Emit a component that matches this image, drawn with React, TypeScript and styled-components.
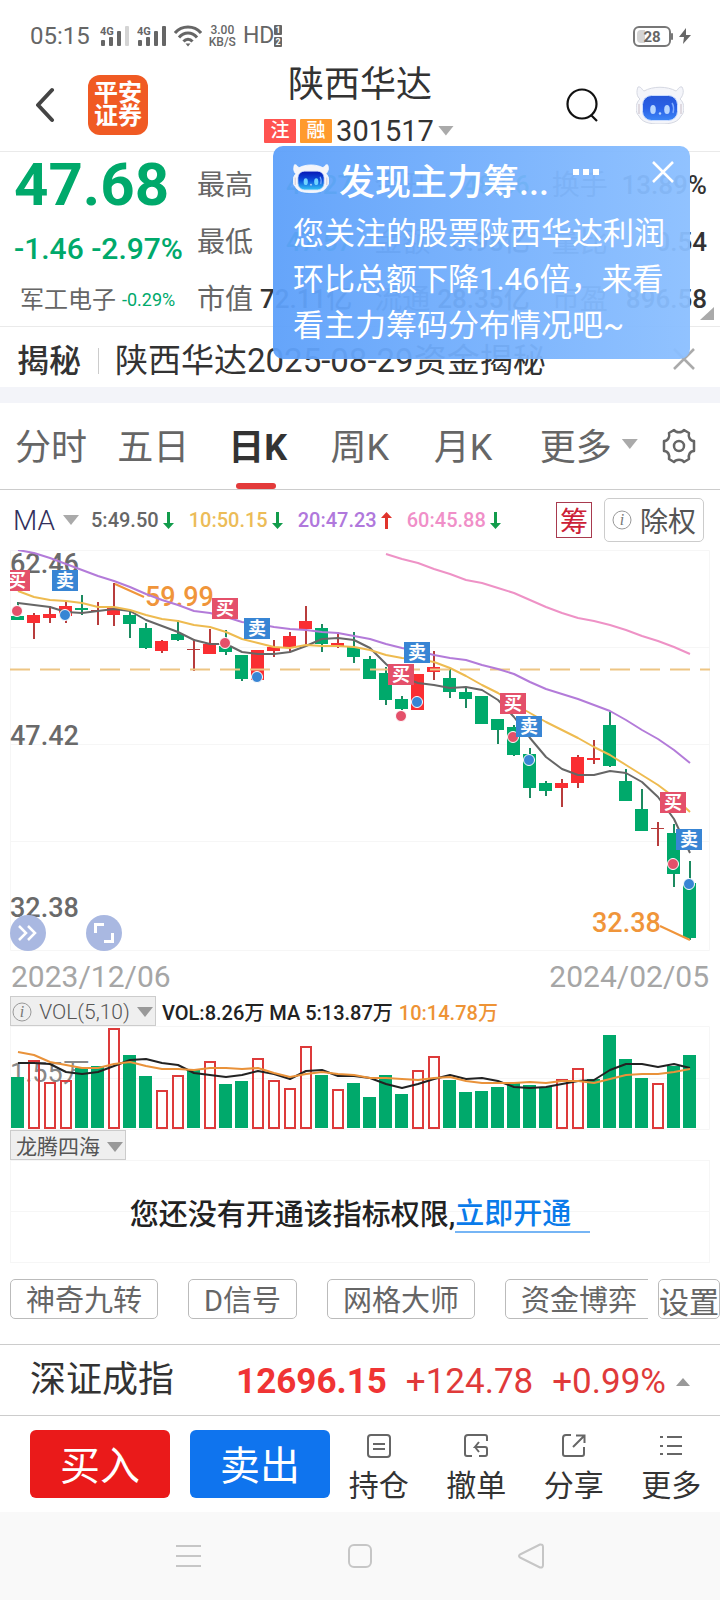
import React from "react";
import styled, { createGlobalStyle } from "styled-components";

const GREEN = "#00a96b";
const RED = "#fa2e32";
const SANS = 'Roboto, "Noto Sans CJK SC", sans-serif';

const GlobalStyle = createGlobalStyle`
  *, *::before, *::after { box-sizing: border-box; }
  body { margin: 0; background: #fff; color: #333; font-family: ${SANS}; }
  button { margin: 0; padding: 0; border: 0; background: none; color: inherit; font: inherit; cursor: pointer; }
  a { color: inherit; text-decoration: none; }
  h1, h2, p, dl, dd { margin: 0; font-weight: 400; }
  svg { display: block; flex: none; }
`;

const Page = styled.main`
  position: relative;
  width: 100%;
  overflow: hidden;
  background: #fff;
`;

/* ---------- status bar ---------- */

const StatusBar = styled.div`
  display: flex;
  align-items: center;
  height: 60px;
  padding: 12px 29px 0 30px;
  gap: 7px;
  color: #666;
`;
const Clock = styled.span`
  font-size: 24px;
  line-height: 24px;
  margin-right: 3px;
`;
const NetSpeed = styled.span`
  font-size: 12px;
  line-height: 12px;
  font-weight: 500;
  text-align: center;
`;
const HdMark = styled.span`
  display: flex;
  align-items: center;
  font-size: 23px;
  line-height: 24px;
`;
const BatteryGroup = styled.span`
  display: flex;
  align-items: center;
  gap: 6px;
  margin-left: auto;
`;

const Signal = ({ last }: { last: string }) => (
  <svg width="30" height="24" viewBox="0 0 30 24" fill="#666">
    <text x="0" y="11" fontSize="11" fontWeight="700" fontFamily="Roboto">4G</text>
    <rect x="1" y="16" width="4" height="6" rx="1" />
    <rect x="9" y="13" width="4" height="9" rx="1" />
    <rect x="17" y="7" width="4" height="15" rx="1" />
    <rect x="25" y="2" width="4" height="20" rx="1" fill={last} />
  </svg>
);

const Wifi = () => (
  <svg width="28" height="22" viewBox="0 0 28 22" fill="none" stroke="#666" strokeWidth="3">
    <path d="M1 8C8 0 20 0 27 8" />
    <path d="M5 12.500C10 6.500 18 6.500 23 12.500" />
    <path d="M9.500 16.500C12 13.500 16 13.500 18.500 16.500" />
    <path d="M11.500 18.500h5L14 21.500Z" fill="#666" stroke="none" />
  </svg>
);

/* ---------- header ---------- */

const Header = styled.header`
  display: grid;
  grid-template-columns: 1fr auto 1fr;
  align-items: center;
  height: 92px;
  padding: 0 36px;
  border-bottom: 1px solid #eaeaea;
`;
const HeaderSide = styled.div<{ $end?: boolean }>`
  display: flex;
  align-items: center;
  justify-content: ${(p) => (p.$end ? "flex-end" : "flex-start")};
  gap: ${(p) => (p.$end ? 38 : 33)}px;
  padding-bottom: 2px;
`;
const BrandLogo = styled.a`
  display: flex;
  align-items: center;
  justify-content: center;
  width: 60px;
  height: 60px;
  border-radius: 12px;
  background: #f05a23;
  color: #fff;
  font-size: 24px;
  font-weight: 700;
  line-height: 23px;
  text-align: center;
`;
const TitleBlock = styled.div`
  display: flex;
  flex-direction: column;
  align-items: center;
`;
const StockName = styled.h1`
  font-size: 36px;
  line-height: 48px;
`;
const CodeButton = styled.button`
  display: flex;
  align-items: center;
  gap: 4px;
  height: 42px;
  padding: 2px 2px 0 0;
  font-size: 29px;
  line-height: 40px;
`;
const Badge = styled.span<{ $bg: string }>`
  width: 32px;
  height: 24px;
  background: ${(p) => p.$bg};
  color: #fff;
  font-size: 19px;
  font-weight: 500;
  line-height: 24px;
  text-align: center;
  border-radius: 1px;
`;
const Caret = styled.span<{ $w?: number; $up?: boolean; $color?: string }>`
  flex: none;
  width: ${(p) => p.$w ?? 16}px;
  height: ${(p) => (p.$up ? 8 : 10)}px;
  background: ${(p) => p.$color ?? "#aaa"};
  clip-path: ${(p) => (p.$up ? "polygon(50% 0, 100% 100%, 0 100%)" : "polygon(0 0, 100% 0, 50% 100%)")};
`;

const Robot = ({ width, id, cyan }: { width: number; id: string; cyan?: boolean }) => (
  <svg width={width} viewBox="0 0 48 38">
    <defs>
      <linearGradient id={id} x1="0" y1="0" x2="0" y2="1">
        <stop offset="0" stopColor={cyan ? "#0716b4" : "#2657d8"} />
        <stop offset=".5" stopColor={cyan ? "#0a50dd" : "#2a60e6"} />
        <stop offset="1" stopColor={cyan ? "#35c4f4" : "#3c86f6"} />
      </linearGradient>
    </defs>
    <path
      d="M2 1C5 0 6 4 8 5C17 0 31 0 40 5C42 4 43 0 46 1C49 6 46 11 44 13C49 17 49 27 45 30C42 36 36 38 24 38S6 36 3 30C-1 27-1 17 4 13C1 11 0 6 2 1Z"
      fill="#f4f5fa" stroke={cyan ? "#fff" : "#d5d8e2"} strokeWidth="1"
    />
    <path d="M3 18v10M45 18v10" stroke="#d8cfd8" strokeWidth="1.500" />
    <rect x="6.500" y="9.500" width="35" height="25" rx="9" fill={`url(#${id})`} stroke="#c9dcff" strokeWidth="1" />
    <ellipse cx="17" cy="23.500" rx="2.800" ry="4.500" fill={cyan ? "#6fd3ff" : "#b5d4ff"} />
    <ellipse cx="31" cy="23.500" rx="2.800" ry="4.500" fill={cyan ? "#6fd3ff" : "#b5d4ff"} />
    <circle cx="24" cy="27.500" r="1.200" fill="#b5d4ff" />
    <path d="M36 17c2 3 2 6 1 10" stroke="#7fabff" strokeWidth="1.500" fill="none" />
  </svg>
);

/* ---------- quote ---------- */

const Quote = styled.section`
  position: relative;
  display: grid;
  grid-template-columns: 183fr 524fr;
  height: 175px;
  padding: 0 13px 0 0;
  border-bottom: 1px solid #eaeaea;
`;
const QuoteMain = styled.div`
  padding: 0 0 0 14px;
  color: ${GREEN};
  white-space: nowrap;
`;
const Price = styled.p`
  font-size: 60px;
  font-weight: 700;
  line-height: 66px;
`;
const Change = styled.p`
  font-size: 30px;
  font-weight: 500;
  line-height: 62px;
`;
const Sector = styled.a`
  display: flex;
  align-items: center;
  gap: 6px;
  padding-left: 6px;
  font-size: 18px;
  line-height: 40px;
  span { color: #666; font-size: 24px; }
`;
const StatGrid = styled.dl`
  display: grid;
  grid-template-columns: repeat(3, 1fr);
  grid-auto-rows: 57px;
  column-gap: 22px;
  padding-top: 5px;
  padding-left: 14px;
`;
const Stat = styled.div`
  display: flex;
  justify-content: space-between;
  line-height: 57px;
  white-space: nowrap;
`;
const StatLabel = styled.dt`
  font-size: 28px;
  color: #666;
`;
const StatValue = styled.dd<{ $color?: string }>`
  font-size: 26px;
  font-weight: 500;
  color: ${(p) => p.$color ?? "#333"};
`;
const Corner = styled.span`
  position: absolute;
  right: 6px;
  bottom: 6px;
  width: 14px;
  height: 13px;
  background: #aaa;
  clip-path: polygon(100% 0, 100% 100%, 0 100%);
`;

const stats: [string, string, string?][] = [
  ["最高", "49.27", GREEN], ["今开", "48.66", GREEN], ["换手", "13.89%"],
  ["最低", "47.57", GREEN], ["金额", "3.98亿"], ["量比", "0.54"],
  ["市值", "72.11亿"], ["流通", "28.35亿"], ["市盈", "896.58"],
];

const NewsRow = styled.section`
  display: flex;
  align-items: center;
  height: 76px;
  padding: 4px 25px 0 17px;
  border-bottom: 16px solid #f3f4f9;
  line-height: 48px;
  white-space: nowrap;
`;
const NewsTag = styled.h2`
  padding: 4px 17px 0 0;
  font-size: 32px;
  font-weight: 500;
`;
const NewsLink = styled.a`
  display: flex;
  align-items: center;
  flex: 1;
  padding-top: 4px;
  font-size: 33px;
  &::before {
    content: "";
    width: 1px;
    height: 26px;
    margin-right: 16px;
    background: #ccc;
  }
`;

const Popup = styled.aside`
  position: absolute;
  top: 146px;
  left: 273px;
  right: 30px;
  height: 213px;
  padding: 13px 16px 0 20px;
  border-radius: 10px;
  background: linear-gradient(90deg, rgba(93, 160, 250, 0.95), rgba(139, 191, 255, 0.95));
  color: #fff;
`;
const PopupHead = styled.div`
  display: flex;
  align-items: flex-start;
  height: 52px;
  & > svg { margin-top: 5px; }
`;
const PopupTitle = styled.h2`
  flex: 1;
  padding-left: 10px;
  font-size: 36px;
  font-weight: 500;
  line-height: 48px;
`;
const PopupTools = styled.div`
  display: flex;
  align-items: center;
  gap: 53px;
  padding-top: 2px;
`;
const PopupText = styled.p`
  font-size: 31px;
  line-height: 46px;
`;
const CloseIcon = ({ color }: { color: string }) => (
  <svg width="22" height="22" viewBox="0 0 22 22" stroke={color} strokeWidth="2.500">
    <path d="M1 1l20 20M21 1L1 21" />
  </svg>
);

/* ---------- period tabs ---------- */

const Tabs = styled.nav`
  display: grid;
  grid-template-columns: 102fr 111fr 102fr 103fr 106fr 122fr 34px;
  align-items: center;
  height: 87px;
  padding: 0 24px 0 15px;
  border-bottom: 1px solid #ccc;
`;
const Tab = styled.button<{ $active?: boolean }>`
  position: relative;
  display: flex;
  align-items: center;
  justify-self: start;
  gap: 10px;
  height: 86px;
  padding-bottom: 4px;
  font-size: 36px;
  font-weight: ${(p) => (p.$active ? 700 : 400)};
  color: ${(p) => (p.$active ? "#333" : "#666")};
  ${(p) =>
    p.$active &&
    `&::after {
      content: "";
      position: absolute;
      left: calc(50% - 22px);
      bottom: 0;
      width: 40px;
      height: 6px;
      border-radius: 3px;
      background: #e33a3a;
    }`}
`;

/* ---------- moving average legend ---------- */

const MaRow = styled.div`
  display: flex;
  align-items: center;
  height: 60px;
  padding: 0 16px 0 13px;
  white-space: nowrap;
`;
const MaPicker = styled.button`
  display: flex;
  align-items: center;
  gap: 8px;
  margin-right: 12px;
  font-size: 28px;
  font-weight: 300;
  color: #33305c;
`;
const MaValue = styled.span<{ $color: string }>`
  display: flex;
  align-items: center;
  gap: 4px;
  margin-right: 15px;
  font-size: 20px;
  font-weight: 500;
  color: ${(p) => p.$color};
`;
const ChipsToggle = styled.button`
  width: 36px;
  height: 36px;
  margin-left: auto;
  border: 1px solid #a83a4e;
  color: #cc2036;
  font-size: 28px;
  line-height: 40px;
`;
const RightsButton = styled.button`
  display: flex;
  align-items: center;
  justify-content: center;
  gap: 8px;
  width: 100px;
  height: 44px;
  margin-left: 12px;
  border: 1px solid #ccc;
  border-radius: 5px;
  font-size: 28px;
  color: #555;
`;

const Arrow = ({ up }: { up?: boolean }) => (
  <svg width="11" height="17" viewBox="0 0 11 17" fill={up ? "#e0342c" : "#129c4c"}>
    {up ? (
      <path d="M5.500 0L11 6H7v11H4V6H0Z" />
    ) : (
      <path d="M5.500 17L11 11H7V0H4v11H0Z" />
    )}
  </svg>
);

const InfoIcon = () => (
  <svg width="20" height="20" viewBox="0 0 20 20">
    <circle cx="10" cy="10" r="9" fill="none" stroke="#999" strokeWidth="1" />
    <text x="10" y="15" textAnchor="middle" fontSize="16" fontStyle="italic" fontFamily="Liberation Serif" fill="#777">i</text>
  </svg>
);

/* ---------- charts ---------- */

const ChartArea = styled.section`
  position: relative;
  & > svg { width: 100%; height: auto; overflow: visible; }
`;
const ChartTools = styled.div`
  position: absolute;
  left: 10px;
  bottom: 0;
  display: flex;
  gap: 40px;
`;
const RoundButton = styled.button`
  display: flex;
  align-items: center;
  justify-content: center;
  width: 36px;
  height: 36px;
  border-radius: 50%;
  background: #a9b8e1;
`;
const DateRow = styled.div`
  display: flex;
  justify-content: space-between;
  height: 45px;
  padding: 6px 11px 0;
  font-size: 30px;
  line-height: 40px;
  color: #a6a6a6;
`;

const STEP = 16;
const FIRST = 17;
const cx = (i: number) => FIRST + i * STEP;
const line = (ys: number[], from = 0) => ys.map((y, i) => `${cx(i + from) + 1},${y}`).join(" ");

/* direction, high, low, body top, body bottom */
const candles: [0 | 1, number, number, number, number][] = [
  [0, 52, 70, 66, 70], [1, 63, 89, 65, 73], [1, 56, 73, 64, 68], [1, 52, 73, 56, 66],
  [0, 45, 65, 58, 60], [1, 52, 75, 60, 61], [1, 33, 76, 58, 65], [0, 62, 88, 65, 74],
  [0, 73, 99, 78, 98], [1, 90, 103, 91, 101], [0, 70, 91, 84, 90], [1, 89, 121, 99, 100],
  [1, 79, 104, 94, 104], [0, 80, 105, 96, 102], [0, 105, 131, 105, 129], [1, 100, 130, 100, 130],
  [1, 90, 107, 97, 101], [1, 82, 102, 86, 97], [1, 56, 95, 71, 79], [0, 74, 102, 78, 94],
  [1, 82, 98, 93, 96], [0, 82, 113, 97, 107], [0, 106, 129, 109, 129], [0, 117, 155, 123, 150],
  [0, 146, 160, 149, 159], [1, 124, 160, 124, 160], [1, 101, 130, 117, 122], [0, 118, 148, 128, 142],
  [0, 137, 158, 142, 149], [0, 146, 174, 146, 174], [0, 169, 194, 169, 180], [0, 175, 206, 177, 205],
  [0, 198, 248, 204, 238], [0, 231, 246, 233, 241], [1, 229, 257, 233, 238], [1, 205, 238, 207, 233],
  [1, 190, 214, 208, 210], [0, 162, 217, 175, 216], [0, 219, 251, 231, 251], [0, 239, 281, 259, 281],
  [1, 272, 296, 278, 279], [0, 274, 337, 283, 324], [0, 311, 390, 333, 388],
];
const ma5 = [53, 55, 57, 62, 63, 61, 59, 61, 70, 76, 82, 90, 94, 94, 102, 104, 104, 102, 96, 89, 88, 90, 98, 114, 127, 133, 135, 138, 137, 140, 150, 167, 188, 207, 219, 225, 225, 221, 223, 232, 247, 269, 303];
const ma10 = [41, 47, 50, 51, 53, 57, 57, 60, 65, 69, 71, 75, 77, 82, 89, 93, 97, 98, 95, 96, 96, 97, 100, 105, 108, 109, 112, 118, 126, 135, 143, 154, 163, 172, 180, 188, 197, 205, 215, 225, 235, 247, 262];
const ma20 = [0, 3, 8, 14, 20, 26, 31, 37, 44, 50, 55, 61, 63, 67, 72, 74, 77, 79, 80, 82, 83, 86, 89, 94, 98, 101, 105, 108, 110, 115, 119, 124, 132, 139, 144, 149, 155, 161, 170, 180, 189, 200, 213];
const ma60 = [4, 9, 13, 19, 24, 30, 33, 38, 43, 50, 57, 63, 68, 71, 75, 80, 86, 91, 97, 104];

/* candle index, flag top, dot centre, side */
const trades: [number, number, number, "买" | "卖"][] = [
  [0, 20, 61, "买"], [3, 20, 65, "卖"], [13, 48, 93, "买"], [15, 68, 127, "卖"],
  [25, 92, 152, "卖"], [24, 114, 166, "买"], [31, 143, 187, "买"], [32, 166, 210, "卖"],
  [41, 242, 314, "买"], [42, 279, 334, "卖"],
];

const KLine = () => (
  <svg viewBox="0 0 720 401" role="img" aria-label="日K线图" fontFamily={SANS} fontSize="27" fontWeight="500">
    <clipPath id="plot"><rect x="10" y="0" width="700" height="401" /></clipPath>
    <path d="M10 .500H709.500V400.500H10.500V.500M10 97.500H709M10 194.500H709M10 291.500H709" fill="none" stroke="#f6f6f6" />
    <g fill="#6a6a6a">
      <text x="10" y="23">62.46</text>
      <text x="10" y="195">47.42</text>
      <text x="10" y="367">32.38</text>
    </g>
    <g clipPath="url(#plot)">
      {candles.map(([up, hi, lo, top, bottom], i) => (
        <g key={i}>
          <rect x={cx(i)} y={hi} width="2" height={lo - hi} fill={up ? "#b83c3c" : "#1c8a60"} />
          <rect x={cx(i) - 6} y={top} width="13" height={bottom - top} fill={up ? (bottom - top < 2 ? "#b83c3c" : RED) : GREEN} />
        </g>
      ))}
      <path d="M10 119.500H710" stroke="#eec583" strokeWidth="2" strokeDasharray="20 10" />
      <text x="145" y="56" fill="#f0953a">59.99</text>
      <text x="592" y="382" fill="#f0953a">32.38</text>
      <g fill="none" strokeWidth="2" strokeLinejoin="round">
        <polyline points={line(ma5)} stroke="#666" />
        <polyline points={line(ma10)} stroke="#eebb50" />
        <polyline points={line(ma60, 23)} stroke="#ee92c6" />
        <polyline points={line(ma20)} stroke="#b37bd9" />
        <path d="M115 34L144 47M660 376L690 390" stroke="#f0953a" />
      </g>
      {trades.map(([i, top, dot, side]) => (
        <g key={i} fill={side === "买" ? "#e4506a" : "#3885d4"}>
          <circle cx={cx(i)} cy={dot} r="5.500" stroke="#fff" strokeWidth="1" />
          <rect x={cx(i) - 13} y={top} width="26" height="21" />
          <text x={cx(i)} y={top + 17} fontSize="18" fontWeight="700" textAnchor="middle" fill="#fff">{side}</text>
        </g>
      ))}
    </g>
  </svg>
);

/* direction, bar top */
const volumes: [0 | 1, number][] = [
  [0, 51], [1, 34], [1, 56], [1, 54], [0, 42], [0, 40], [1, 2], [0, 29], [0, 50], [1, 64], [1, 49],
  [0, 44], [1, 35], [0, 58], [0, 55], [1, 32], [1, 54], [1, 62], [1, 20], [0, 49], [1, 63], [0, 57],
  [0, 71], [0, 49], [0, 68], [1, 44], [1, 30], [0, 54], [0, 66], [0, 65], [0, 61], [0, 57], [0, 59],
  [0, 61], [1, 53], [1, 42], [0, 53], [0, 9], [0, 33], [0, 52], [1, 57], [0, 40], [0, 29],
];
const vol5 = [37, 37, 38, 46, 48, 46, 40, 34, 33, 37, 39, 47, 49, 51, 49, 45, 48, 53, 45, 44, 50, 50, 52, 58, 62, 58, 53, 49, 53, 52, 55, 61, 62, 61, 58, 55, 54, 44, 38, 38, 41, 38, 42];
const vol10 = [26, 29, 36, 39, 42, 42, 38, 36, 40, 43, 43, 44, 42, 42, 43, 42, 47, 51, 48, 46, 48, 49, 52, 52, 53, 54, 52, 51, 55, 57, 57, 57, 56, 57, 55, 55, 57, 53, 49, 48, 48, 46, 43];

const VolumeChart = () => (
  <svg viewBox="0 0 720 104" role="img" aria-label="成交量" fontFamily={SANS} fontSize="27">
    <path d="M10 .500H709.500V103.500H10.500V.500M10 52.500H709" fill="none" stroke="#f6f6f6" />
    <text x="10" y="56" fill="#888">1.55万</text>
    {volumes.map(([up, top], i) =>
      up ? (
        <rect key={i} x={cx(i) - 4} y={top + 1} width="10" height={101 - top} fill="none" stroke="#dd3a3a" strokeWidth="2" />
      ) : (
        <rect key={i} x={cx(i) - 6} y={top} width="13" height={102 - top} fill={GREEN} />
      )
    )}
    <g fill="none" strokeWidth="2" strokeLinejoin="round">
      <polyline points={line(vol5)} stroke="#222" />
      <polyline points={line(vol10)} stroke="#e9923a" />
    </g>
  </svg>
);

const IndicatorRow = styled.div`
  display: flex;
  align-items: center;
  gap: 6px;
  height: 30px;
  padding-left: 10px;
  font-size: 20px;
  font-weight: 500;
  line-height: 26px;
  white-space: nowrap;
  color: #222;
  & > span { padding-top: 4px; }
`;
const IndicatorButton = styled.button<{ $w: number }>`
  display: flex;
  align-items: center;
  justify-content: space-between;
  width: ${(p) => p.$w}px;
  height: 30px;
  padding: ${(p) => (p.$w > 120 ? "2px 2px 0 1px" : "4px 2px 0 5px")};
  border: 1px solid #ccc;
  background: #efefef;
  font-size: 21px;
  font-weight: ${(p) => (p.$w > 120 ? 300 : 400)};
  line-height: 24px;
  color: #555;
`;
const Orange = styled.span`
  color: #ee9335;
`;

const Locked = styled.section`
  display: flex;
  align-items: center;
  justify-content: center;
  height: 103px;
  margin: 0 10px;
  padding: 6px 0 0;
  border: 1px solid #f6f6f6;
  background: linear-gradient(#f6f6f6, #f6f6f6) 0 50% / 100% 1px no-repeat;
  font-size: 29px;
  font-weight: 500;
  line-height: 34px;
  white-space: nowrap;
  color: #222;
  a {
    padding-right: 19px;
    border-bottom: 2px solid #76b5f5;
    color: #0a7bea;
  }
`;

/* ---------- indicator chips ---------- */

const ChipBar = styled.div`
  display: flex;
  gap: 10px;
  padding: 16px 0 25px 10px;
`;
const ChipScroller = styled.div`
  display: flex;
  flex: 1;
  gap: 30px;
  overflow: hidden;
`;
const Chip = styled.button<{ $tight?: boolean }>`
  flex: none;
  height: 40px;
  padding: ${(p) => (p.$tight ? "6px 0 0" : "4px 15px 0")};
  border: 1px solid #bbb;
  border-radius: 5px;
  font-size: ${(p) => (p.$tight ? 30 : 29)}px;
  line-height: 34px;
  white-space: nowrap;
  color: #666;
`;

/* ---------- index bar ---------- */

const IndexBar = styled.section`
  display: flex;
  align-items: center;
  justify-content: space-between;
  height: 72px;
  padding: 4px 30px 0;
  border-top: 1px solid #ccc;
  border-bottom: 1px solid #ccc;
  font-size: 35px;
  line-height: 66px;
  white-space: nowrap;
  color: #e03a3a;
`;
const IndexName = styled.span`
  padding-bottom: 4px;
  font-size: 36px;
  color: #333;
`;
const IndexValues = styled.div`
  display: flex;
  align-items: center;
  gap: 19px;
  strong { color: #f03434; }
  span:last-child { margin-left: -9px; }
`;

/* ---------- actions ---------- */

const ActionBar = styled.footer`
  display: flex;
  height: 96px;
  padding: 14px 0 14px 30px;
`;
const TradeButton = styled.button<{ $bg: string }>`
  flex: 140 1 0;
  height: 68px;
  margin-right: 20px;
  padding-top: 6px;
  border-radius: 6px;
  background: ${(p) => p.$bg};
  color: #fff;
  font-size: 40px;
  line-height: 62px;
  &:nth-of-type(2) { margin-right: 0; }
`;
const ToolList = styled.div`
  display: grid;
  grid-template-columns: repeat(4, 1fr);
  flex: 390 1 0;
`;
const ToolButton = styled.button`
  display: flex;
  flex-direction: column;
  align-items: center;
  gap: 6px;
  padding-top: 4px;
  font-size: 30px;
  line-height: 44px;
`;

const ToolIcon = ({ children }: { children: React.ReactNode }) => (
  <svg width="24" height="24" viewBox="0 0 24 24" fill="none" stroke="#666" strokeWidth="2">
    {children}
  </svg>
);

const SystemNav = styled.nav`
  display: flex;
  align-items: center;
  justify-content: space-between;
  height: 88px;
  padding: 0 176px;
  background: #f9f9f9;
`;

export default function App() {
  return (
    <>
      <GlobalStyle />
      <Page>
        <StatusBar>
          <Clock>05:15</Clock>
          <Signal last="#d4d4d4" />
          <Signal last="#666" />
          <Wifi />
          <NetSpeed>3.00<br />KB/S</NetSpeed>
          <HdMark>
            HD
            <svg width="8" height="22" viewBox="0 0 8 22" fontSize="9" fontWeight="700" fontFamily="Roboto">
              <rect width="8" height="10" rx="1" fill="#666" />
              <rect y="12" width="8" height="10" rx="1" fill="#666" />
              <text x="4" y="8" textAnchor="middle" fill="#fff">1</text>
              <text x="4" y="20" textAnchor="middle" fill="#fff">2</text>
            </svg>
          </HdMark>
          <BatteryGroup>
            <svg width="40" height="21" viewBox="0 0 40 21">
              <rect x="1" y="1" width="36" height="19" rx="5" fill="none" stroke="#777" strokeWidth="2" />
              <path d="M8 4h4v13H8a4 4 0 0 1-4-4V8a4 4 0 0 1 4-4Z" fill="#d4d4d4" />
              <rect x="38" y="7" width="2" height="7" rx="1" fill="#777" />
              <text x="19" y="16" textAnchor="middle" fontSize="15" fontWeight="700" fontFamily="Roboto" fill="#666">28</text>
            </svg>
            <svg width="12" height="16" viewBox="0 0 12 16" fill="#666">
              <path d="M7 0L0 9h5l-1 7L12 7H7Z" />
            </svg>
          </BatteryGroup>
        </StatusBar>

        <Header>
          <HeaderSide>
            <button aria-label="返回">
              <svg width="19" height="36" viewBox="0 0 19 36" fill="none" stroke="#444" strokeWidth="4" strokeLinecap="round" strokeLinejoin="round">
                <path d="M16 3L2 18L16 33" />
              </svg>
            </button>
            <BrandLogo href="#home">平安<br />证券</BrandLogo>
          </HeaderSide>
          <TitleBlock>
            <StockName>陕西华达</StockName>
            <CodeButton>
              <Badge $bg="#ff5350">注</Badge>
              <Badge $bg="#ff9a2d">融</Badge>
              301517
              <Caret />
            </CodeButton>
          </TitleBlock>
          <HeaderSide $end>
            <button aria-label="搜索">
              <svg width="32" height="34" viewBox="0 0 32 34" fill="none" stroke="#111" strokeWidth="2.200">
                <circle cx="16" cy="16" r="14.500" />
                <path d="M25 27l6 6" />
              </svg>
            </button>
            <button aria-label="智能助手"><Robot width={48} id="robotFace" /></button>
          </HeaderSide>
        </Header>

        <Quote>
          <QuoteMain>
            <Price>47.68</Price>
            <Change>-1.46 -2.97%</Change>
            <Sector href="#sector"><span>军工电子</span>-0.29%</Sector>
          </QuoteMain>
          <StatGrid>
            {stats.map(([label, value, color]) => (
              <Stat key={label}>
                <StatLabel>{label}</StatLabel>
                <StatValue $color={color}>{value}</StatValue>
              </Stat>
            ))}
          </StatGrid>
          <Corner />
        </Quote>

        <NewsRow>
          <NewsTag>揭秘</NewsTag>
          <NewsLink href="#news">陕西华达2025-08-29资金揭秘</NewsLink>
          <button aria-label="关闭资讯"><CloseIcon color="#aaa" /></button>
        </NewsRow>

        <Popup>
          <PopupHead>
            <Robot width={36} id="popupFace" cyan />
            <PopupTitle>发现主力筹...</PopupTitle>
            <PopupTools>
              <button aria-label="更多选项">
                <svg width="26" height="6" viewBox="0 0 26 6" fill="#fff">
                  <path d="M0 0h6v6H0ZM10 0h6v6h-6ZM20 0h6v6h-6Z" />
                </svg>
              </button>
              <button aria-label="关闭提示"><CloseIcon color="#fff" /></button>
            </PopupTools>
          </PopupHead>
          <PopupText>您关注的股票陕西华达利润环比总额下降1.46倍，来看看主力筹码分布情况吧~</PopupText>
        </Popup>

        <Tabs>
          <Tab>分时</Tab>
          <Tab>五日</Tab>
          <Tab $active>日K</Tab>
          <Tab>周K</Tab>
          <Tab>月K</Tab>
          <Tab>更多<Caret /></Tab>
          <button aria-label="图表设置">
            <svg width="34" height="36" viewBox="0 0 34 36" fill="none" stroke="#666" strokeWidth="2.500" strokeLinejoin="round">
              <path d="M12 2C14 5 20 5 22 2L27 5C26 9 28 13 32 13V23C28 23 26 27 27 31L22 34C20 31 14 31 12 34L7 31C8 27 6 23 2 23V13C6 13 8 9 7 5Z" />
              <circle cx="17" cy="18" r="5" />
            </svg>
          </button>
        </Tabs>

        <MaRow>
          <MaPicker>MA<Caret /></MaPicker>
          <MaValue $color="#666">5:49.50<Arrow /></MaValue>
          <MaValue $color="#ecbc58">10:50.15<Arrow /></MaValue>
          <MaValue $color="#b078dc">20:47.23<Arrow up /></MaValue>
          <MaValue $color="#f08fc8">60:45.88<Arrow /></MaValue>
          <ChipsToggle>筹</ChipsToggle>
          <RightsButton><InfoIcon />除权</RightsButton>
        </MaRow>

        <ChartArea>
          <KLine />
          <ChartTools>
            <RoundButton aria-label="快进">
              <svg width="20" height="20" viewBox="0 0 20 20" fill="none" stroke="#fff" strokeWidth="2.500">
                <path d="M1 3l7 7-7 7M10 3l7 7-7 7" />
              </svg>
            </RoundButton>
            <RoundButton aria-label="全屏">
              <svg width="20" height="20" viewBox="0 0 20 20" fill="none" stroke="#fff" strokeWidth="3">
                <path d="M1.500 10V1.500H10M10 18.500H18.500V10" />
              </svg>
            </RoundButton>
          </ChartTools>
        </ChartArea>
        <DateRow>
          <time>2023/12/06</time>
          <time>2024/02/05</time>
        </DateRow>

        <IndicatorRow>
          <IndicatorButton $w={146}><InfoIcon />VOL(5,10)<Caret $color="#999" /></IndicatorButton>
          <span>VOL:8.26万 MA 5:13.87万</span>
          <Orange>10:14.78万</Orange>
        </IndicatorRow>
        <ChartArea><VolumeChart /></ChartArea>
        <IndicatorRow>
          <IndicatorButton $w={116}>龙腾四海<Caret $color="#999" /></IndicatorButton>
        </IndicatorRow>
        <Locked>
          您还没有开通该指标权限,<a href="#open">立即开通</a>
        </Locked>

        <ChipBar>
          <ChipScroller>
            <Chip>神奇九转</Chip>
            <Chip>D信号</Chip>
            <Chip>网格大师</Chip>
            <Chip>资金博弈</Chip>
          </ChipScroller>
          <Chip $tight>设置</Chip>
        </ChipBar>

        <IndexBar>
          <IndexName>深证成指</IndexName>
          <IndexValues>
            <strong>12696.15</strong>
            <span>+124.78</span>
            <span>+0.99%</span>
            <Caret $w={14} $up $color="#999" />
          </IndexValues>
        </IndexBar>

        <ActionBar>
          <TradeButton $bg="#ea1a1a">买入</TradeButton>
          <TradeButton $bg="#0f74ee">卖出</TradeButton>
          <ToolList>
            <ToolButton>
              <ToolIcon><rect x="1" y="1" width="22" height="22" rx="3" /><path d="M6 10h12M6 15h12" /></ToolIcon>
              持仓
            </ToolButton>
            <ToolButton>
              <ToolIcon><path d="M8 22H3a2 2 0 0 1-2-2V4a3 3 0 0 1 3-3h17a2 2 0 0 1 2 2v4M15 8l-4 5h10a2 2 0 0 1 2 2v5a2 2 0 0 1-2 2h-6M11 13l4 5" /></ToolIcon>
              撤单
            </ToolButton>
            <ToolButton>
              <ToolIcon><path d="M9 1H4a3 3 0 0 0-3 3v16a2 2 0 0 0 2 2h17a2 2 0 0 0 2-2V13M11 13L22 2M14 1.500h8.500V9" /></ToolIcon>
              分享
            </ToolButton>
            <ToolButton>
              <ToolIcon><path d="M1 3h3M8 3h15M1 12h3M8 12h15M1 20h3M8 20h15" /></ToolIcon>
              更多
            </ToolButton>
          </ToolList>
        </ActionBar>

        <SystemNav>
          <button aria-label="最近任务">
            <svg width="25" height="24" viewBox="0 0 25 24" stroke="#c6c6c6" strokeWidth="2"><path d="M0 2h25M0 12h25M0 22h25" /></svg>
          </button>
          <button aria-label="主页">
            <svg width="24" height="24" viewBox="0 0 24 24" fill="none" stroke="#c6c6c6" strokeWidth="2"><rect x="1" y="1" width="22" height="22" rx="5" /></svg>
          </button>
          <button aria-label="返回上一级">
            <svg width="26" height="26" viewBox="0 0 26 26" fill="none" stroke="#c6c6c6" strokeWidth="2" strokeLinejoin="round"><path d="M22 1.500L2 11.500Q0 13 2 14.500L22 24.500Q25 25 25 22V4Q25 1 22 1.500Z" /></svg>
          </button>
        </SystemNav>
      </Page>
    </>
  );
}
